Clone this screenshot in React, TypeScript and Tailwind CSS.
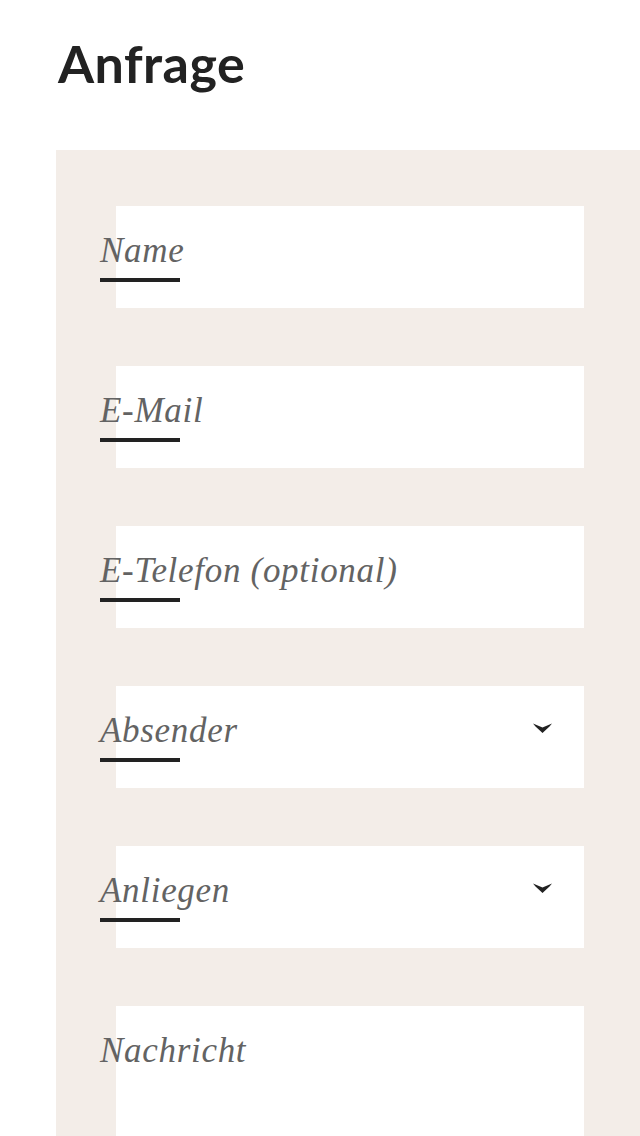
import React from "react";

const Chevron = () => (
  <svg width="19" height="10" viewBox="0 0 19 10" className="block">
    <path d="M0 0.5 L9.5 4.5 L19 0.5 L16.5 3.5 L9.5 10 L2.5 3.5 Z" fill="#222" />
  </svg>
);

const fields: { label: string; select?: boolean; tall?: boolean }[] = [
  { label: "Name" },
  { label: "E-Mail" },
  { label: "E-Telefon (optional)" },
  { label: "Absender", select: true },
  { label: "Anliegen", select: true },
  { label: "Nachricht", tall: true },
];

export default function App() {
  return (
    <div className="min-h-[1136px] bg-white overflow-hidden">
      <h1
        className="pl-[58px] pt-[33px] text-[52px] leading-[60px] font-bold text-[#222] tracking-[0.5px]"
        style={{ fontFamily: "Lato, 'Noto Sans', sans-serif" }}
      >
        Anfrage
      </h1>
      <div className="ml-[56px] mt-[57px] bg-[#f3ede8] pt-[56px] pl-[60px] pr-[56px] pb-[60px] flex flex-col gap-[58px]">
        {fields.map((f) => (
          <div
            key={f.label}
            className={`bg-white flex items-start justify-between pr-[32px] ${f.tall ? "h-[200px]" : "h-[102px]"}`}
          >
            <div className="-ml-[16px] pt-[26px]">
              <div
                className="italic text-[35px] leading-[38px] tracking-[0.7px] text-[#636363]"
                style={{ fontFamily: "'Liberation Serif', serif" }}
              >
                {f.label}
              </div>
              {!f.tall && <div className="mt-[8px] w-[80px] h-[4px] bg-[#222]" />}
            </div>
            {f.select && (
              <div className="pt-[37px]">
                <Chevron />
              </div>
            )}
          </div>
        ))}
      </div>
    </div>
  );
}
